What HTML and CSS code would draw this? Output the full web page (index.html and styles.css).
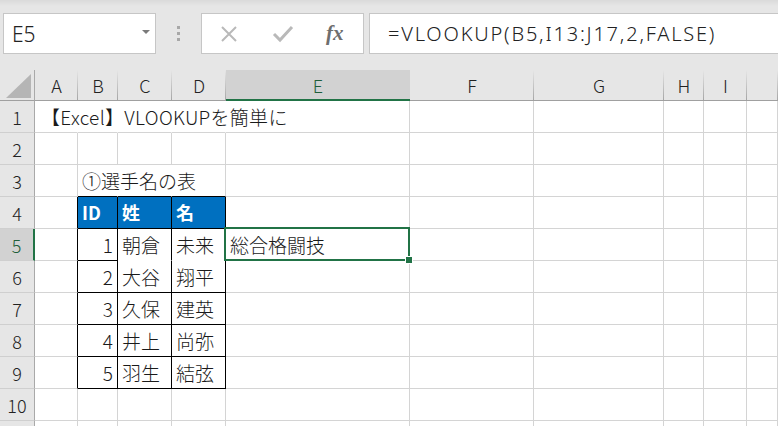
FILE: index.html
```html
<!DOCTYPE html>
<html lang="ja">
<head>
<meta charset="utf-8">
<title>Excel VLOOKUP</title>
<link rel="stylesheet" href="styles.css">
</head>
<body>
<div class="app">
  <div class="toolbar">
    <div class="namebox">
      <span class="name">E5</span>
      <svg class="dd" width="8" height="5" viewBox="0 0 8 5"><polygon points="0,0 8,0 4,4" fill="#7a7a7a"/></svg>
    </div>
    <div class="grip"><span></span><span></span><span></span></div>
    <div class="fxbox">
      <svg class="ico" width="20" height="20" viewBox="0 0 20 20"><path d="M3 3 L17 17 M17 3 L3 17" stroke="#b9b9b9" stroke-width="2" fill="none"/></svg>
      <svg class="ico" width="22" height="20" viewBox="0 0 22 20"><path d="M2 10 L8 16 L20 3" stroke="#b9b9b9" stroke-width="3" fill="none"/></svg>
      <span class="fx">fx</span>
    </div>
    <div class="formula">=VLOOKUP(B5,I13:J17,2,FALSE)</div>
  </div>
  <div class="sheet">
    <div class="corner"><svg width="26" height="24" viewBox="0 0 26 24"><polygon points="25,0 25,24 0,24" fill="#b5b5b5"/></svg></div>
    <div class="ch">A</div><div class="ch">B</div><div class="ch">C</div><div class="ch">D</div><div class="ch sel">E</div><div class="ch">F</div><div class="ch">G</div><div class="ch">H</div><div class="ch">I</div><div class="ch"></div>

    <div class="rh">1</div>
    <div class="c nr t1"><span class="ov">【Excel】VLOOKUPを簡単に</span></div><div class="c nr"></div><div class="c nr"></div><div class="c nr"></div><div class="c"></div><div class="c"></div><div class="c"></div><div class="c"></div><div class="c"></div><div class="c"></div>

    <div class="rh">2</div>
    <div class="c"></div><div class="c"></div><div class="c"></div><div class="c"></div><div class="c"></div><div class="c"></div><div class="c"></div><div class="c"></div><div class="c"></div><div class="c"></div>

    <div class="rh">3</div>
    <div class="c"></div><div class="c nr tt"><span class="ov">①選手名の表</span></div><div class="c nr tt"></div><div class="c tt"></div><div class="c"></div><div class="c"></div><div class="c"></div><div class="c"></div><div class="c"></div><div class="c"></div>

    <div class="rh">4</div>
    <div class="c tl"></div><div class="c tb th">ID</div><div class="c tb th">姓</div><div class="c tb th">名</div><div class="c"></div><div class="c"></div><div class="c"></div><div class="c"></div><div class="c"></div><div class="c"></div>

    <div class="rh sel">5</div>
    <div class="c tl"></div><div class="c tb num">1</div><div class="c tr">朝倉</div><div class="c tr">未来</div><div class="c cur">総合格闘技<div class="selbox"><span class="handle"></span></div></div><div class="c"></div><div class="c"></div><div class="c"></div><div class="c"></div><div class="c"></div>

    <div class="rh">6</div>
    <div class="c tl"></div><div class="c tb num">2</div><div class="c tb">大谷</div><div class="c tb">翔平</div><div class="c"></div><div class="c"></div><div class="c"></div><div class="c"></div><div class="c"></div><div class="c"></div>

    <div class="rh">7</div>
    <div class="c tl"></div><div class="c tb num">3</div><div class="c tb">久保</div><div class="c tb">建英</div><div class="c"></div><div class="c"></div><div class="c"></div><div class="c"></div><div class="c"></div><div class="c"></div>

    <div class="rh">8</div>
    <div class="c tl"></div><div class="c tb num">4</div><div class="c tb">井上</div><div class="c tb">尚弥</div><div class="c"></div><div class="c"></div><div class="c"></div><div class="c"></div><div class="c"></div><div class="c"></div>

    <div class="rh">9</div>
    <div class="c tl"></div><div class="c tb num">5</div><div class="c tb">羽生</div><div class="c tb">結弦</div><div class="c"></div><div class="c"></div><div class="c"></div><div class="c"></div><div class="c"></div><div class="c"></div>

    <div class="rh">10</div>
    <div class="c"></div><div class="c"></div><div class="c"></div><div class="c"></div><div class="c"></div><div class="c"></div><div class="c"></div><div class="c"></div><div class="c"></div><div class="c"></div>

    <div class="rh"></div>
    <div class="c"></div><div class="c"></div><div class="c"></div><div class="c"></div><div class="c"></div><div class="c"></div><div class="c"></div><div class="c"></div><div class="c"></div><div class="c"></div>
  </div>
</div>
</body>
</html>
```
FILE: styles.css
```css
html, body {
  margin: 0;
  padding: 0;
  overflow: hidden;
  background: #ffffff;
}
.app {
  width: 778px;
  height: 426px;
  overflow: hidden;
  font-family: "Noto Sans CJK JP", sans-serif;
  font-weight: 300;
  color: #1a1a1a;
}
.toolbar {
  height: 70px;
  box-sizing: border-box;
  padding: 13px 0 0 3px;
  background: linear-gradient(#dadada, #e6e6e6 6px);
  display: flex;
  align-items: flex-start;
}
.namebox {
  width: 153px;
  height: 41px;
  box-sizing: border-box;
  background: #fff;
  border: 1px solid #c6c6c6;
  display: flex;
  align-items: center;
  justify-content: space-between;
  padding: 0 5px 0 8px;
}
.name {
  font-family: "Noto Sans", "Noto Sans CJK JP", sans-serif;
  font-size: 21px;
  font-weight: 300;
  color: #222;
}
.dd { margin-top: -2px; }
.grip {
  width: 45px;
  height: 41px;
  display: flex;
  flex-direction: column;
  align-items: center;
  justify-content: center;
  gap: 3px;
}
.grip span {
  width: 3px;
  height: 3px;
  background: #a8a8a8;
}
.fxbox {
  width: 163px;
  height: 41px;
  box-sizing: border-box;
  background: #fff;
  border: 1px solid #c6c6c6;
  display: flex;
  align-items: center;
  padding: 0 0 0 17px;
  gap: 33px;
}
.fx {
  font-family: "Liberation Serif", serif;
  font-style: italic;
  font-weight: bold;
  font-size: 21px;
  color: #6e6e6e;
  margin-left: -1px;
}
.formula {
  flex: 1;
  margin-left: 5px;
  height: 41px;
  box-sizing: border-box;
  background: #fff;
  border: 1px solid #c6c6c6;
  border-right: none;
  padding-left: 18px;
  font-family: "Noto Sans", "Noto Sans CJK JP", sans-serif;
  font-weight: 300;
  font-size: 20px;
  letter-spacing: 1.8px;
  line-height: 39px;
  white-space: nowrap;
  color: #222;
}
.sheet {
  display: grid;
  grid-template-columns: 35px 43px 40px 54px 54px 184px 124px 130px 40px 43px 31px;
  grid-template-rows: 31px repeat(11, 32px);
  font-size: 19px;
}
.corner {
  background: #e6e6e6;
  border-right: 1px solid #a9a9a9;
  border-bottom: 1px solid #a0a0a0;
  display: flex;
  align-items: flex-end;
  justify-content: flex-end;
  padding: 0 2px 2px 0;
}
.ch {
  background: linear-gradient(#e6e6e6, #a6a6a6) right / 1px 100% no-repeat, #e6e6e6;
  border-bottom: 1px solid #a0a0a0;
  display: flex;
  align-items: center;
  justify-content: center;
  color: #222;
  font-size: 18px;
}
.ch.sel {
  background: #d2d2d2;
  border-bottom: 2px solid #217346;
  color: #1e5e3a;
}
.rh {
  background: #e6e6e6;
  border-right: 1px solid #a9a9a9;
  border-bottom: 1px solid #cfcfcf;
  display: flex;
  align-items: center;
  justify-content: center;
  color: #222;
  font-size: 18px;
}
.rh.sel {
  background: #d2d2d2;
  border-right: 2px solid #217346;
  color: #1e5e3a;
}
.c {
  border-right: 1px solid #d4d4d4;
  border-bottom: 1px solid #d4d4d4;
  padding: 0 4px;
  line-height: 31px;
  white-space: nowrap;
  overflow: visible;
  min-width: 0;
}
.c.t1 { padding-left: 6px; letter-spacing: 0.3px; }
.c.nr { border-right-color: transparent; }
.ov { position: relative; z-index: 1; }
.c.tt { border-bottom-color: #000; }
.c.tl { border-right-color: #000; }
.c.tb { border-right-color: #000; border-bottom-color: #000; }
.c.tr { border-right-color: #000; border-bottom-color: transparent; }
.c.th {
  background: #0070c0;
  color: #fff;
  font-weight: bold;
  font-size: 18px;
}
.c.num { text-align: right; }
.c.cur { position: relative; }
.selbox {
  position: absolute;
  left: -2px;
  top: -2px;
  right: -1px;
  bottom: -1px;
  border: 2px solid #217346;
  pointer-events: none;
}
.handle {
  position: absolute;
  right: -5px;
  bottom: -5px;
  width: 6px;
  height: 6px;
  background: #217346;
  border: 1px solid #fff;
}
```
